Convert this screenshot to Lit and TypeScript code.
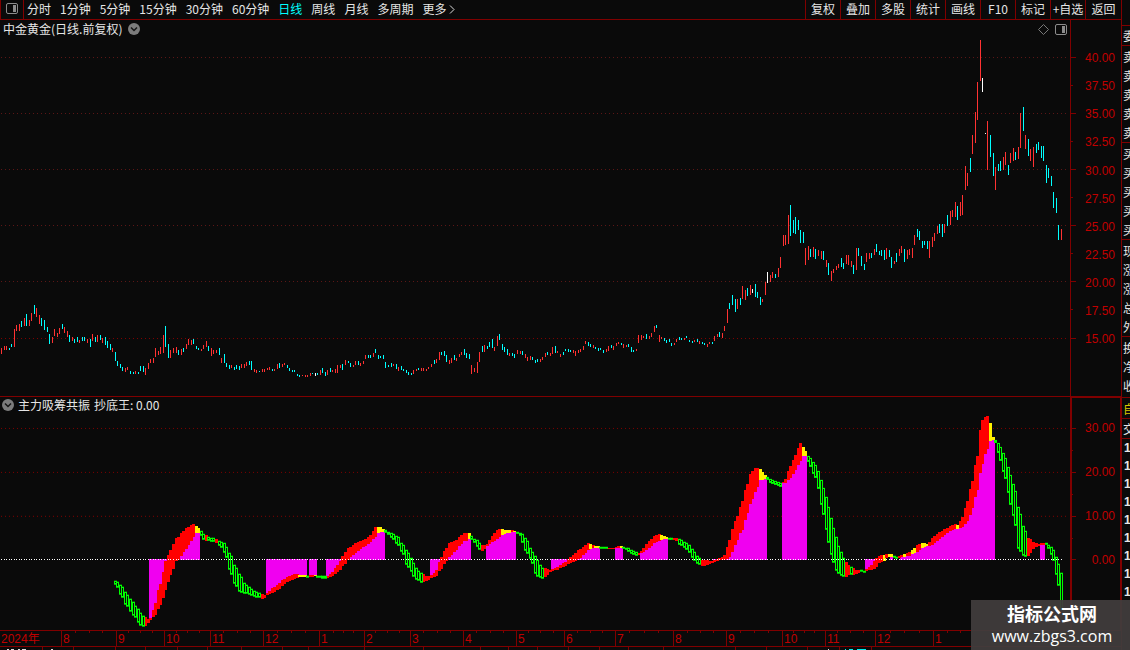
import { LitElement, html, svg, css } from "lit";
import { customElement, state } from "lit/decorators.js";
import { classMap } from "lit/directives/class-map.js";

/* Daily candles: colour (r up, c down, w flat), top and bottom. */
const CANDLES = `r348-354 r346-350 r346-350 c348-350 c344-347 r329-347 r325-331 r324-331 c321-327 r318-326
c314-326 r320-326 r313-321 c305-314 r308-317 r315-324 c318-326 c320-330 c327-332 c334-344
r337-343 r329-336 r333-337 r328-334 c324-329 r327-333 r331-337 c335-342 r337-341 c339-343
c337-342 r340-343 c337-341 c337-341 r339-343 c339-347 r334-341 c337-342 r335-342 c335-340
r338-343 c337-345 c341-348 c344-350 r348-352 c352-361 c361-366 c364-368 c367-371 r368-372
r367-370 c371-374 c372-374 r371-374 c372-374 c366-371 c366-372 r368-375 r363-369 r359-363
r358-363 r348-357 r351-355 r347-354 r335-353 c326-347 c344-358 r350-358 r348-353 r347-353
c350-355 r349-355 c348-352 r344-349 r339-345 r340-345 c339-344 c346-349 c348-350 r349-351
r345-349 r341-347 c346-351 r348-356 r350-354 r350-353 c348-355 r358-363 c354-363 c363-367
c365-369 r365-368 c367-370 c365-369 c366-370 r364-368 r364-368 r362-366 c361-365 c361-370
r369-372 r370-373 c371-372 r369-372 r369-372 r368-370 r367-370 c369-371 r369-371 r364-369
c363-368 r364-367 r363-365 c365-368 c368-371 c370-372 c370-372 c374-376 c375-377 r375-376
r375-377 r375-377 r373-376 c373-374 w373-376 c373-375 r370-375 c368-373 c372-376 r370-375
c368-372 r370-372 r369-373 r365-373 r365-368 c364-370 r360-365 c361-363 c363-367 r365-367
r361-365 c361-365 r363-366 r361-364 r355-359 c355-358 c355-358 r353-357 c349-353 c355-359
c356-358 c355-359 c362-368 c365-367 c363-367 r364-366 c364-369 r367-371 c366-370 c369-371
c370-373 c372-375 c373-375 r370-374 r369-371 c368-370 r368-371 r368-371 r369-371 r367-369
r364-367 c360-364 r359-363 r352-360 c352-355 c351-356 c355-362 r360-364 r358-363 c355-360
r358-361 r354-357 r352-355 c349-355 c353-358 c354-359 r365-374 r368-372 r362-373 r352-362
c346-352 r345-352 c346-349 c342-347 c339-348 r347-351 r336-346 c334-340 c344-350 c347-352
c349-355 r353-356 c353-356 c354-358 r350-354 r351-354 c351-355 r354-358 r357-361 r356-360
c357-360 c360-363 c359-362 r359-362 r357-360 r353-357 c352-355 r353-356 r347-354 c346-353
r351-353 r354-357 c352-355 c349-351 c349-352 c350-352 r350-353 r351-356 r350-353 r349-352
r346-350 r341-344 c342-346 c344-347 r345-348 c347-349 c348-351 c348-350 c350-353 r349-352
r346-351 c345-348 r346-350 r343-346 r342-344 c343-345 r344-348 r345-347 c344-347 c347-352
c350-352 r349-351 r335-343 r335-340 r336-338 c334-339 r336-339 r333-337 r326-332 c325-328
r335-342 r337-339 c338-341 c340-343 c339-342 c343-346 r343-345 r339-342 c337-340 c338-340
r338-340 c336-338 c340-342 c341-343 r340-342 c339-342 r341-344 c342-344 c343-345 r344-347
r342-344 c342-344 r336-341 r334-337 c332-337 r333-338 r326-331 r309-323 c303-309 c295-305
c299-312 r299-309 c298-305 r286-299 r290-300 c288-296 r285-295 w289-293 c284-297 c292-298
c297-305 r299-302 r282-295 w272-283 r275-282 r272-278 c274-278 r268-277 r257-268 r235-246
r235-245 r215-244 c205-236 c220-233 c217-234 c220-230 c230-243 c232-243 r248-265 r246-260
c249-257 r247-257 c249-259 r250-256 r251-259 c251-260 r260-267 c263-275 r271-281 r269-273
r266-270 r264-268 c258-267 c263-269 r255-264 r255-265 r261-267 c265-274 r248-270 c248-256
c256-266 c264-270 r253-262 r253-259 c253-258 r249-255 c244-252 c251-255 c250-256 c250-260
r248-259 c250-257 c257-268 r261-264 c253-262 r249-256 r246-253 c249-262 r250-259 r249-255
r248-258 r235-245 c229-237 c231-240 c241-248 c241-245 c241-249 r241-258 r237-247 r233-241
r226-234 c224-233 c224-237 r224-233 c215-226 r211-225 r210-217 r202-217 c206-220 r202-216
r195-215 r166-190 r173-186 c158-172 r135-154 r112-143 r82-120 r40-81 w78-92 w133-134
r121-170 c135-157 c153-176 r167-190 c164-171 c161-171 r157-170 r152-165 c165-175 r153-163
r148-161 c152-160 r147-159 r113-148 c107-131 r135-149 c139-156 r149-161 r147-167 c144-153
c142-150 c146-158 c146-161 c165-183 c168-178 c176-186 c192-208 c198-213 c225-240 r229-240`
  .trim()
  .split(/\s+/)
  .map((t) => {
    const [top, bottom] = t.slice(1).split("-").map(Number);
    return { kind: t[0], top, bottom };
  });

/* Indicator ribbon: x, colour (g falling, r rising, y turning), upper and lower edge. */
const RIBBON = `115g581-585 118g583-590 120g585-595 123g588-600 125g592-605 128g596-608 130g599-612 133g602-616
135g606-618 138g609-623 140g613-626 143g616-627 146r618-626 148r619-623 150r618-620 152r613-618
155r603-615 157r593-611 160r584-605 163r572-598 165r561-590 168r555-582 170r550-575 173r544-569
175r539-562 178r537-560 181r533-556 183r531-552 186r528-549 188r527-545 191r525-541 193r524-537
196y526-533 199y529-533 202g532-537 204g535-542 206r535-541 208g537-541 212g538-542 216r539-543
219g541-546 222g542-549 224g543-553 227g549-560 229g553-570 232g558-578 234g565-584 237g570-588
239g574-592 242g579-593 244g583-594 247g586-594 250g588-595 253g590-597 257g592-598 260g593-598
263r594-599 265r595-597 268r592-594 271r589-593 276r586-591 281r581-587 286r577-582 291r575-580
296r574-578 299y575-577 306y575-577 308g576-577 310r575-577 313r575-577 315y575-576 318g576-577
322g576-579 326g576-579 328r575-577 331r573-577 334r570-575 337r565-572 340r561-570 342r556-566
345r552-564 348r548-560 350r547-557 353r545-555 356r542-552 360r541-549 365r539-546 370r535-542
373r531-539 375r527-537 376r526-536 379y527-532 384y529-532 386g531-533 390g532-537 394g534-541
398g537-546 401g543-552 404g546-557 406g550-565 409g554-569 412g560-574 414g566-579 417g569-580
419g572-582 421g573-583 424r575-582 427r576-580 429r576-579 432r575-578 435r572-577 437r568-575
439r562-571 442r555-568 444r551-564 447r546-560 450r542-556 454r541-552 458r538-547 461r535-544
464r533-541 467r533-541 469y533-539 472g538-540 475g539-544 478g541-548 480g545-551 483r545-551
486r545-546 488r542-545 491r537-543 496r531-540 499r529-537 502y529-535 505y530-534 508y530-533
511r530-532 514y531-532 517g532-534 520g533-536 522g534-543 524g537-549 527g541-554 530g548-559
532g552-564 535g556-574 537g560-577 540g565-578 543g569-579 545r568-577 548r569-574 550r570-572
553r569-570 556r567-570 560r565-568 565r562-566 568r559-564 573r555-562 577r551-560 582r548-556
587r543-551 590y544-549 593r545-548 597y546-548 600g547-549 606g547-549 609r548-549 613r548-549
616r547-548 619r546-548 622y546-548 624g547-549 627g548-551 630g549-553 634g551-555 637g553-556
639r552-553 642r550-553 645r545-551 650r540-547 653r537-544 658r534-541 661y535-540 664y536-539
667y538-539 670g538-540 673g538-540 675r538-540 678g539-544 681g540-546 684g542-548 687g543-551
690g546-554 692g549-558 695g553-562 697g556-564 700g559-565 703r560-566 706r560-565 712r561-563
715r559-562 720r558-560 724r555-560 727r547-559 730r537-556 732r529-552 735r521-545 738r513-537
740r507-533 743r498-528 745r490-520 748r481-510 750r474-504 753r469-496 755r468-492 758r468-484
760y469-480 763y473-480 766y476-479 768g478-480 770g479-483 773g480-484 777g482-486 781g483-487
783r482-483 786r478-483 788r471-480 791r464-477 795r455-470 798r448-465 800r443-461 803y447-456
806y453-456 808g456-462 811g459-470 815g465-478 817g468-485 819g474-492 821g480-505 823g488-515
826g497-530 828g507-543 831g518-555 833g528-563 836g537-571 838g546-574 841g552-576 843g558-577
846r562-577 848r565-575 851g567-575 854r569-575 857r570-573 860g570-572 864g571-573 866r569-571
870r566-570 873r563-569 875r559-568 878r556-564 881r555-562 884y555-561 887r553-557 891y554-557
893g556-558 896g557-559 898r557-558 901r555-557 904y554-557 908r552-556 912y550-554 918r544-551
924y543-547 927y544-546 930r541-546 933r537-544 938r533-540 943r530-536 950r526-531 955r524-529
957y525-529 960r521-528 963r515-526 966r505-523 969r493-518 972r481-508 974r470-500 977r456-490
979r435-478 982r420-464 985r417-454 988r416-446 990y423-441 993y437-440 996g441-445 998g443-453
1000g447-461 1003g453-472 1006g460-482 1008g467-493 1010g475-505 1013g484-516 1016g495-531 1018g507-549
1021g517-554 1023g526-556 1026g533-557 1028r538-556 1031r540-552 1033r542-549 1036r543-547 1039r544-546
1042r543-545 1044r542-544 1047g544-546 1049g545-551 1052g548-557 1054g551-565 1056g557-575 1059g568-592
1061g573-610`
  .trim()
  .split(/\s+/)
  .map((t) => {
    const m = /^(\d+)([gry])(\d+)-(\d+)$/.exec(t)!;
    return { x: +m[1], kind: m[2], top: +m[3], bottom: +m[4] };
  });

/* Stretches in which the space between ribbon and zero is filled. */
const FILLS = [
  [149, 200], [266, 307], [309, 317], [326, 385], [430, 471], [486, 516], [551, 600], [615, 623],
  [640, 668], [713, 717], [726, 767], [782, 807], [865, 879], [890, 893], [901, 995], [1040, 1045],
];

const ZERO = 559;
const barX = (i: number) => Math.floor(1.5 + (43 * i) / 17);

function ribbonBars() {
  const bars: { x: number; kind: string; top: number; bottom: number; fill: boolean }[] = [];
  for (let i = 45; i < CANDLES.length; i++) {
    const x = barX(i);
    let k = RIBBON.findIndex((p) => p.x >= x);
    if (k < 0) k = RIBBON.length - 1;
    const b = RIBBON[k];
    const a = RIBBON[Math.max(0, k - 1)];
    const t = b.x === a.x ? 1 : Math.min(1, Math.max(0, (x - a.x) / (b.x - a.x)));
    bars.push({
      x,
      kind: t < 0.5 ? a.kind : b.kind,
      top: Math.round(a.top + (b.top - a.top) * t),
      bottom: Math.round(a.bottom + (b.bottom - a.bottom) * t),
      fill: FILLS.some(([from, to]) => x >= from && x < to),
    });
  }
  return bars;
}

const COLORS: Record<string, string> = { r: "#ff3232", c: "#00ffff", w: "#ffffff" };
const MONTHS: [string, number][] = [
  ["2024年", 0], ["8", 61], ["9", 116], ["10", 164], ["11", 210], ["12", 263], ["1", 319], ["2", 364],
  ["3", 410], ["4", 463], ["5", 516], ["6", 564], ["7", 615], ["8", 673], ["9", 726], ["10", 782],
  ["11", 825], ["12", 875], ["1", 933],
];
const WEEK_TICKS = [
  75, 89, 102, 128, 140, 152, 176, 187, 199, 223, 237, 250, 277, 291, 305, 333, 343, 353, 375, 387, 399,
  423, 437, 450, 476, 490, 503, 528, 540, 553, 577, 590, 602, 629, 644, 658, 687, 700, 713, 740, 754, 768,
  793, 804, 814, 837, 850, 863, 890, 904, 919, 947, 960,
];
const TAB_TICKS = [
  42, 73, 115, 145, 177, 207, 241, 282, 308, 364, 423, 480, 508, 537, 568, 599, 628, 663, 735, 766, 807, 839, 871,
];
const PERIODS = ["分时", "1分钟", "5分钟", "15分钟", "30分钟", "60分钟", "日线", "周线", "月线", "多周期"];
const TOOLS = ["复权", "叠加", "多股", "统计", "画线", "F10", "标记", "+自选", "返回"];

const panelIcon = html`<svg class="icon" width="12" height="11" viewBox="0 0 12 11" aria-hidden="true">
  <rect x="0.5" y="0.5" width="11" height="10" rx="1.5" fill="none" stroke="#8c8c8c" />
  <rect x="7" y="2" width="3" height="7" fill="#8c8c8c" />
</svg>`;
const chevronIcon = html`<svg class="icon" width="12" height="12" viewBox="0 0 12 12" aria-hidden="true">
  <circle cx="6" cy="6" r="6" fill="#7c7c7c" />
  <path d="M3 4.5 6 7.5 9 4.5" fill="none" stroke="#161616" stroke-width="1.5" />
</svg>`;

@customElement("app-root")
export class AppRoot extends LitElement {
  @state() private period = "日线";

  static styles = css`
    :host {
      display: grid;
      grid-template-columns: minmax(0, 1fr) 9px;
      position: relative;
      height: 100vh;
      overflow: hidden;
      background: #0a0a0a;
      color: #e6e6e6;
      font: 12px/18px "Noto Sans CJK SC", sans-serif;
    }
    * { box-sizing: border-box; }
    button {
      appearance: none;
      border: 0;
      padding: 0 0 1px;
      margin: 0;
      background: none;
      color: inherit;
      font: inherit;
      white-space: nowrap;
      cursor: pointer;
    }
    svg { display: block; }
    .icon { flex: none; }
    .main { display: flex; flex-direction: column; min-width: 0; }
    .toolbar { display: flex; height: 20px; border-bottom: 1px solid #800000; }
    .toggle {
      display: grid;
      place-items: center;
      width: 24px;
      border: solid #800000;
      border-width: 0 1px;
      padding: 0 1px 2px 0;
    }
    .periods { display: flex; flex: 1; gap: 9px; padding-left: 3px; min-width: 0; overflow: hidden; line-height: 16px; }
    .active { color: #00ffff; }
    .more { display: flex; align-items: center; gap: 3px; }
    .tools { display: flex; line-height: 16px; }
    .tool { width: 35px; border-left: 1px solid #800000; }
    .tool:last-child { width: 36px; }
    .panel { display: grid; grid-template-columns: minmax(0, 1fr) 45px; min-height: 0; }
    .price { flex: 377 1 0; border-bottom: 1px solid #800000; }
    .indicator { flex: 233 1 0; }
    .plot { display: grid; grid-template: minmax(0, 1fr) / minmax(0, 1fr); min-height: 0; }
    .plot > * { grid-area: 1 / 1; }
    .chart { width: 100%; height: 100%; }
    .title { display: flex; align-items: center; align-self: start; gap: 6px; height: 18px; padding: 0 9px 0 3px; }
    .indicator .title { gap: 4px; padding-left: 2px; height: 16px; }
    .spacer { flex: 1; }
    .axis {
      display: flex;
      flex-direction: column;
      min-height: 0;
      color: #c00000;
      font-family: "Liberation Sans", sans-serif;
      text-align: right;
    }
    .axis span { display: flex; flex: 1 1 0; align-items: center; justify-content: flex-end; min-height: 0; }
    .price .axis { padding: 24px 6px 43px 0; }
    .indicator .axis { padding: 8px 5px 48px 0; border: solid #800000; border-width: 1px 1px 0 0; }
    .timeline { display: grid; grid-template: 20px / minmax(0, 1fr); }
    .timeline > * { grid-area: 1 / 1; }
    .months {
      display: flex;
      height: 17px;
      border: solid #800000;
      border-width: 1px 0;
      color: #c00000;
      font-family: "Liberation Sans", "Noto Sans CJK SC", sans-serif;
      line-height: 16px;
    }
    .month { flex: none; border-left: 1px solid #800000; padding-left: 1px; white-space: nowrap; overflow: hidden; }
    .month:first-child { border-left: 0; }
    .quotes { border-left: 1px solid #800000; overflow: hidden; line-height: 19px; min-height: 0; }
    .group { border-bottom: 1px solid #800000; padding: 1px 0 0 1px; }
    .group.first { height: 26px; }
    .group.flat { padding-top: 0; }
    .group.wide { padding-bottom: 2px; }
    .group.yellow { color: #d8c800; }
    .quotes span { display: block; width: 12px; }
    .trades { padding-left: 2px; font-family: "Liberation Sans", sans-serif; font-weight: bold; line-height: 18px; }
    .mark {
      position: absolute;
      right: 0;
      bottom: 0;
      width: 159px;
      height: 50px;
      padding: 3px 0 0 3px;
      background: rgba(64, 60, 60, 0.95);
      color: #ffffff;
      text-align: center;
      text-decoration: none;
    }
    .mark strong { display: block; font: bold 18px/24px "Liberation Sans", "Noto Sans CJK SC", sans-serif; }
    .mark span { display: block; font: 16px/18px "Open Sans", sans-serif; }
  `;

  private grid(y: number, color: string) {
    return svg`<path d="M1 ${y}.5H1067" stroke=${color} stroke-dasharray="1 3" />`;
  }

  private priceChart() {
    return html`<svg class="chart" viewBox="0 20 1076 376" preserveAspectRatio="none" shape-rendering="crispEdges" role="img" aria-label="中金黄金 日线">
      ${[57, 113, 169, 225, 281].map((y) => this.grid(y, "#5c1616"))}
      ${this.grid(338, "#800000")}
      <rect x="1070" y="20" width="1" height="376" fill="#800000" />
      ${[57, 113, 169, 225, 281, 338].map((y) => svg`<rect x="1071" y=${y} width="5" height="1" fill="#800000" />`)}
      ${[85, 141, 197, 253, 309].map((y) => svg`<rect x="1071" y=${y} width="2" height="1" fill="#800000" />`)}
      ${CANDLES.map((c, i) => svg`<rect x=${barX(i)} y=${c.top} width="1" height=${c.bottom - c.top} fill=${COLORS[c.kind]} />`)}
    </svg>`;
  }

  private indicatorChart() {
    const bars = ribbonBars();
    return html`<svg class="chart" viewBox="0 397 1076 233" preserveAspectRatio="none" shape-rendering="crispEdges" role="img" aria-label="主力吸筹共振">
      ${[428, 472, 516].map((y) => this.grid(y, "#800000"))}
      <rect x="1070" y="397" width="2" height="233" fill="#800000" />
      <rect x="1070" y="397" width="6" height="1" fill="#800000" />
      ${[428, 472, 516, 559].map((y) => svg`<rect x="1072" y=${y} width="4" height="1" fill="#800000" />`)}
      ${[450, 494, 538].map((y) => svg`<rect x="1072" y=${y} width="1" height="1" fill="#800000" />`)}
      ${bars
        .filter((b) => b.fill && (b.bottom <= ZERO || b.top > ZERO))
        .map((b) =>
          b.top > ZERO
            ? svg`<rect x=${b.x - 1} y=${ZERO} width="3" height=${b.top - ZERO} fill="#f000f0" />`
            : svg`<rect x=${b.x - 1} y=${b.bottom} width="3" height=${ZERO + 1 - b.bottom} fill="#f000f0" />`
        )}
      ${bars
        .filter((b) => b.kind !== "g")
        .map((b) => svg`<rect x=${b.x - 1} y=${b.top} width="3" height=${Math.max(1, b.bottom - b.top)} fill=${b.kind === "y" ? "#fff000" : "#ff0000"} />`)}
      ${bars
        .filter((b) => b.kind === "g")
        .map((b) => svg`<rect x=${b.x - 0.5} y=${b.top + 0.5} width="2" height=${Math.max(1, b.bottom - b.top - 1)} fill="#0a0a0a" stroke="#00ff00" />`)}
      ${CANDLES.map((_, i) => svg`<rect x=${barX(i)} y=${ZERO} width="1" height="1" fill="#ffffff" />`)}
    </svg>`;
  }

  private timeline() {
    return html`<div class="timeline">
      <div class="months">
        ${MONTHS.map(([label, x], i) => {
          const end = i + 1 < MONTHS.length ? MONTHS[i + 1][1] : 1121;
          return html`<span class="month" style="width:${((end - x) / 1121) * 100}%">${label}</span>`;
        })}
      </div>
      <svg class="chart" viewBox="0 630 1121 20" preserveAspectRatio="none" shape-rendering="crispEdges" aria-hidden="true">
        ${WEEK_TICKS.map((x) => svg`<rect x=${x} y="631" width="1" height="2" fill="#800000" />`)}
        ${TAB_TICKS.map((x) => svg`<rect x=${x} y="647" width="1" height="3" fill="#800000" />`)}
        <path d="M7 649.5h2m2 0h3m4 0h2m2 0h4m25 0h2M828 649.5h1" stroke="#dcdcdc" />
        <path d="M845 649.5h1m3 0h4m4 0h9" stroke="#00f0f0" />
      </svg>
    </div>`;
  }

  render() {
    const rows = (chars: string) => [...chars].map((c) => html`<span>${c}</span>`);
    return html`
      <main class="main">
        <header class="toolbar">
          <button class="toggle" aria-label="侧栏">${panelIcon}</button>
          <nav class="periods">
            ${PERIODS.map(
              (p) => html`<button class=${classMap({ active: p === this.period })} @click=${() => (this.period = p)}>${p}</button>`
            )}
            <button class="more">更多
              <svg class="icon" width="6" height="9" viewBox="0 0 6 9" aria-hidden="true"><path d="M1 .5 5 4.5 1 8.5" fill="none" stroke="#dcdcdc" /></svg>
            </button>
          </nav>
          <div class="tools">${TOOLS.map((t) => html`<button class="tool">${t}</button>`)}</div>
        </header>
        <section class="panel price">
          <div class="plot">
            ${this.priceChart()}
            <div class="title">
              <span>中金黄金(日线.前复权)</span>
              ${chevronIcon}
              <span class="spacer"></span>
              <svg class="icon" width="11" height="11" viewBox="0 0 11 11" aria-hidden="true"><path d="M5.5.5 10.5 5.5 5.5 10.5.5 5.5Z" fill="none" stroke="#787878" /></svg>
              ${panelIcon}
            </div>
          </div>
          <div class="axis">
            ${["40.00", "37.50", "35.00", "32.50", "30.00", "27.50", "25.00", "22.50", "20.00", "17.50", "15.00"].map((v) => html`<span>${v}</span>`)}
          </div>
        </section>
        <section class="panel indicator">
          <div class="plot">
            ${this.indicatorChart()}
            <div class="title">${chevronIcon}<span>主力吸筹共振</span><span>抄底王: 0.00</span></div>
          </div>
          <div class="axis">${["30.00", "20.00", "10.00", "0.00"].map((v) => html`<span>${v}</span>`)}</div>
        </section>
        ${this.timeline()}
      </main>
      <aside class="quotes">
        <div class="group first"></div>
        <div class="group flat">${rows("委")}</div>
        <div class="group">${rows("卖卖卖卖卖")}</div>
        <div class="group">${rows("买买买买买")}</div>
        <div class="group">${rows("现涨涨总外")}</div>
        <div class="group wide">${rows("换净收")}</div>
        <div class="group yellow">${rows("自")}</div>
        <div class="group flat">${rows("交")}</div>
        <div class="trades">${rows("111111111")}</div>
      </aside>
      <a class="mark" href="#"><strong>指标公式网</strong><span>www.zbgs3.com</span></a>
    `;
  }
}
